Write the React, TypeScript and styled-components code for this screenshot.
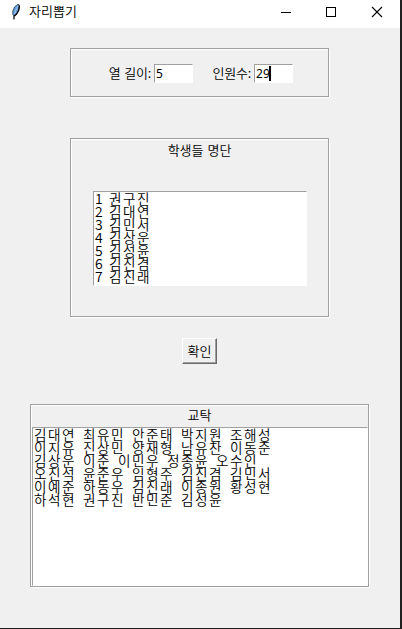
import React from "react";
import styled, { createGlobalStyle } from "styled-components";

const Global = createGlobalStyle`
  * { box-sizing: border-box; }
  html, body { margin: 0; padding: 0; overflow: hidden; background: #202020; }
`;

const Window = styled.div`
  width: 402px;
  height: 629px;
  display: flex;
  flex-direction: column;
  background: #f0f0f0;
  border-right: 2px solid #202020;
  border-bottom: 1px solid #202020;
  color: #000;
  font: 350 13px/16px "Noto Sans CJK KR", sans-serif;
`;

const TitleBar = styled.header`
  flex: none;
  height: 28px;
  display: flex;
  align-items: flex-start;
  background: #fff;
  padding-left: 8px;
`;

const AppIcon = styled.svg`
  flex: none;
  margin-top: 4px;
`;

const Title = styled.span`
  flex: 1;
  margin: 3px 0 0 5px;
`;

const Controls = styled.div`
  display: flex;
  height: 28px;
`;

const ControlButton = styled.button`
  width: 46px;
  height: 28px;
  padding: 0;
  border: 0;
  background: none;
  display: block;
  svg { display: block; }
`;

const Body = styled.main`
  flex: 1;
  display: flex;
  flex-direction: column;
  align-items: center;
  padding-top: 20px;
`;

const Groove = styled.section<{ $w: number; $h: number; $gap?: number }>`
  flex: none;
  width: ${(p) => p.$w}px;
  height: ${(p) => p.$h}px;
  margin: 0 1px ${(p) => p.$gap ?? 0}px 0;
  border: 1px solid #a0a0a0;
  box-shadow: 1px 1px 0 #fff, inset 1px 1px 0 #fff;
`;

const FieldRow = styled(Groove)`
  display: flex;
  align-items: flex-start;
  padding: 15px 0 0 37px;
`;

const Field = styled.label<{ $w: number }>`
  display: flex;
  width: ${(p) => p.$w}px;
  justify-content: flex-end;
  align-items: flex-start;
  white-space: nowrap;
`;

const FieldText = styled.span`
  margin: 1px 3px 0 0;
  letter-spacing: -0.2px;
  word-spacing: 1px;
`;

const Sunken = styled.div`
  background: #fff;
  border: 1px solid;
  border-color: #a0a0a0 #fff #fff #a0a0a0;
`;

const Entry = styled(Sunken)`
  width: 39px;
  height: 19px;
  display: flex;
  padding-left: 1px;
  line-height: 18px;
  font-family: "Noto Sans", sans-serif;
  font-size: 12px;
  font-weight: 400;
  letter-spacing: 0.2px;
`;

const Caret = styled.i`
  width: 2px;
  height: 15px;
  margin: 1px 0 0 -1px;
  background: #000;
`;

const Caption = styled.h2<{ $line: number }>`
  margin: 0;
  font-size: 13px;
  font-weight: 350;
  line-height: ${(p) => p.$line}px;
  height: 22px;
  word-spacing: 1px;
  text-align: center;
`;

const List = styled(Sunken)<{ $w: number; $h: number; $x: number; $y: number }>`
  width: ${(p) => p.$w}px;
  height: ${(p) => p.$h}px;
  margin: ${(p) => p.$y}px 0 0 ${(p) => p.$x}px;
  padding: 0 0 0 1px;
  overflow: hidden;
`;

const Row = styled.div`
  display: flex;
  gap: 7px;
  height: 13px;
  font-size: 13.6px;
  line-height: 13px;
  letter-spacing: 1.49px;
  white-space: pre;
  font-weight: 350;
`;

const Index = styled.span`
  width: 7px;
  font-size: 14px;
  letter-spacing: 0;
`;

const Confirm = styled.button`
  flex: none;
  width: 35px;
  height: 26px;
  margin: 0 1px 40px 0;
  padding: 0;
  border: 1px solid;
  border-color: #fff #696969 #696969 #fff;
  box-shadow: inset -1px -1px 0 #a0a0a0;
  background: #f0f0f0;
  color: #000;
  font: 350 13px/22px "Noto Sans CJK KR", sans-serif;
`;

const students = ["권구진", "김대연", "김민서", "김상운", "김성윤", "김진겸", "김진래"];

const seats = [
  "김대연 최유민 안준태 박지원 조해성",
  "이지유 진상민 양재형 남유찬 이동준",
  "김상운 이준 이민우 정종윤 오수인",
  "오진석 윤준우 임형주 김진겸 김민서",
  "이예준 하동우 김진래 이종원 황성현",
  "하석현 권구진 반민준 김성윤",
];

const Feather = () => (
  <AppIcon width="16" height="16" viewBox="0 0 16 16">
    <path d="M11 0.5 H9.5 L6.5 3 L4.8 7 V10.5 L6 12 L8.5 10.5 L10.5 7 L11.5 3 Z" fill="#5f9ee0" stroke="#30363e" strokeWidth="0.8" />
    <path d="M10 2 L8 6 L6.5 10" fill="none" stroke="#b4d2f0" strokeWidth="0.8" />
    <path d="M11.3 1.5 L10.8 6 L8.3 10.3 L6 12.3 V15.5" fill="none" stroke="#000" strokeWidth="1.2" />
  </AppIcon>
);

export default function App() {
  return (
    <Window>
      <Global />
      <TitleBar>
        <Feather />
        <Title>자리뽑기</Title>
        <Controls>
          <ControlButton aria-label="최소화">
            <svg width="46" height="28"><path d="M19 12.5h10" stroke="#000" /></svg>
          </ControlButton>
          <ControlButton aria-label="최대화">
            <svg width="46" height="28"><rect x="18.5" y="7.5" width="9" height="9" fill="none" stroke="#000" /></svg>
          </ControlButton>
          <ControlButton aria-label="닫기">
            <svg width="46" height="28"><path d="M18 7l10 10M28 7l-10 10" stroke="#000" strokeWidth="1.1" /></svg>
          </ControlButton>
        </Controls>
      </TitleBar>
      <Body>
        <FieldRow $w={259} $h={49} $gap={41}>
          <Field $w={85}>
            <FieldText>열 길이:</FieldText>
            <Entry>5</Entry>
          </Field>
          <Field $w={100}>
            <FieldText>인원수:</FieldText>
            <Entry>29<Caret /></Entry>
          </Field>
        </FieldRow>
        <Groove $w={259} $h={179} $gap={21}>
          <Caption $line={22}>학생들 명단</Caption>
          <List $w={214} $h={95} $x={22} $y={30}>
            {students.map((name, i) => (
              <Row key={name}>
                <Index>{i + 1}</Index>
                <span>{name}</span>
              </Row>
            ))}
          </List>
        </Groove>
        <Confirm>확인</Confirm>
        <Groove $w={339} $h={183}>
          <Caption $line={20}>교탁</Caption>
          <List $w={336} $h={159} $x={1} $y={0}>
            {seats.map((line) => (
              <Row key={line}>
                {line.split(" ").map((name) => (
                  <span key={name}>{name}</span>
                ))}
              </Row>
            ))}
          </List>
        </Groove>
      </Body>
    </Window>
  );
}
